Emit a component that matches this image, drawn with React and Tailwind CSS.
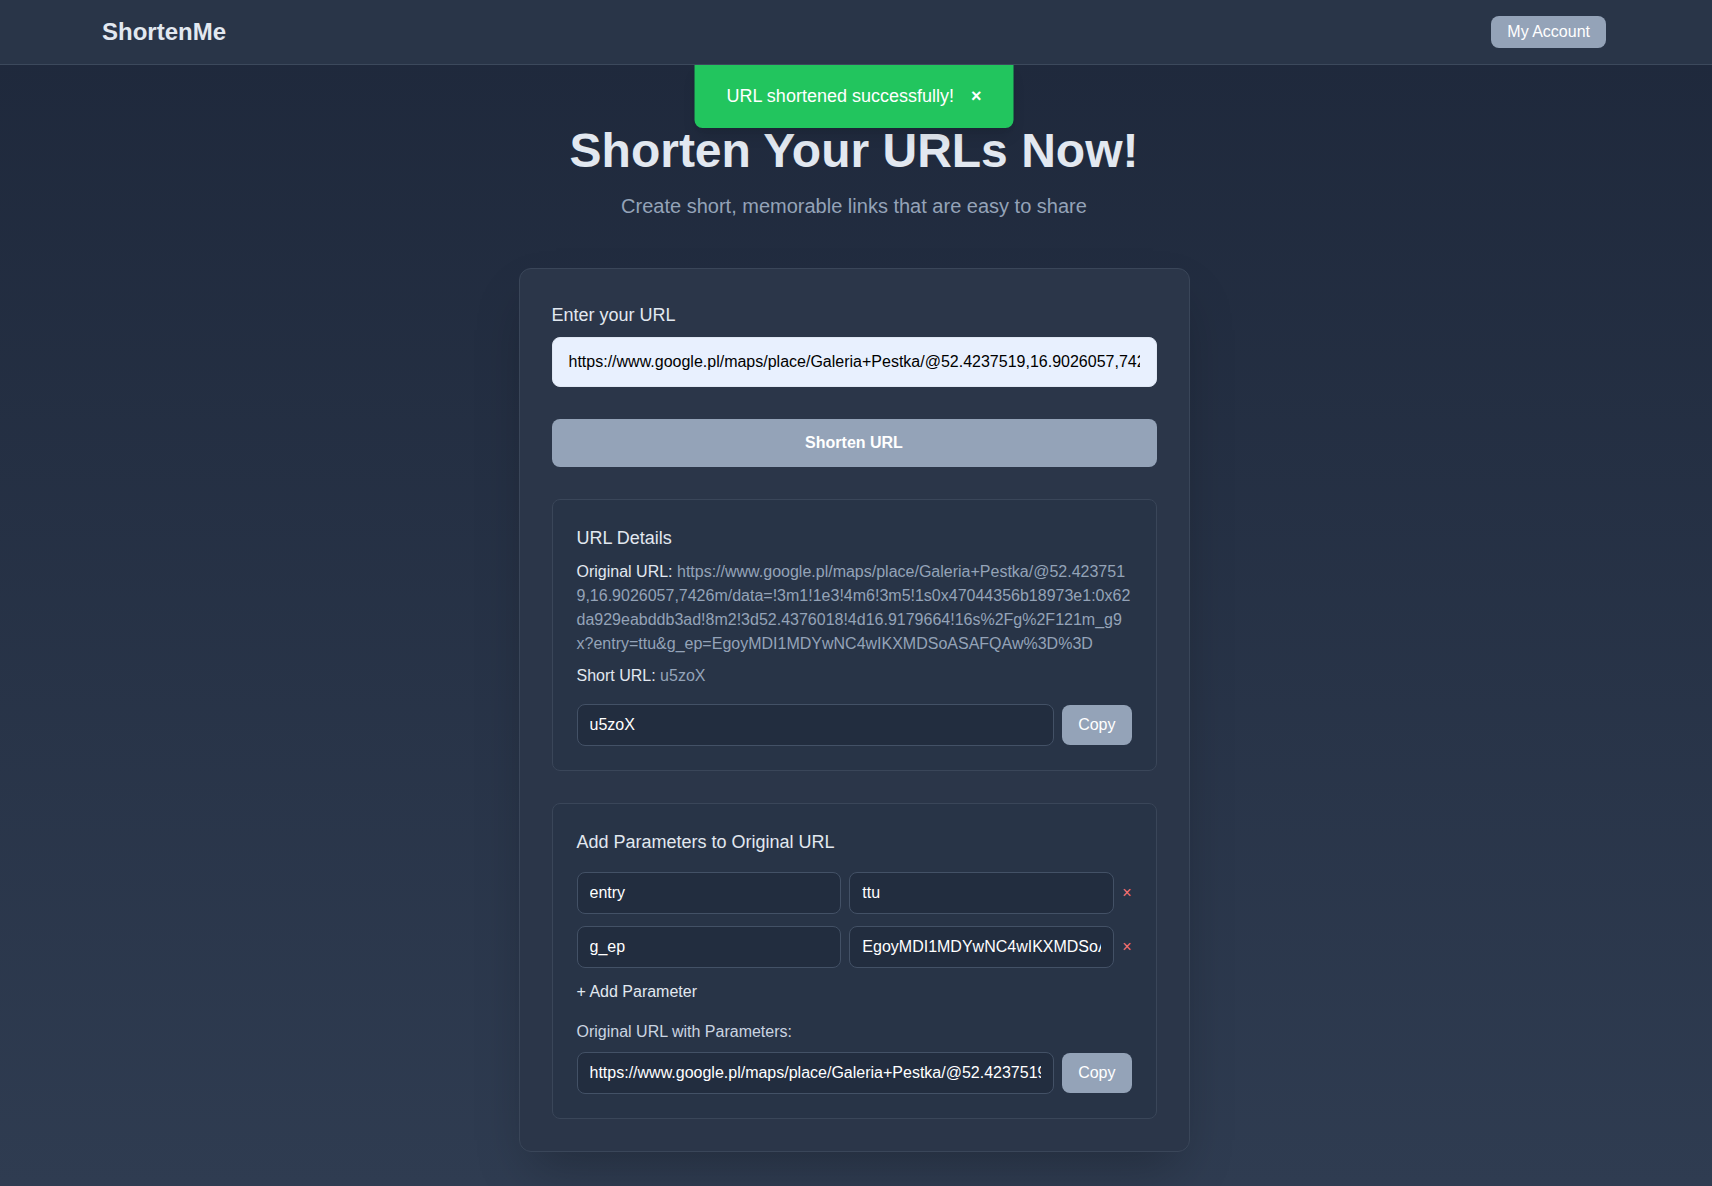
import React from "react";

const ORIGINAL =
  "https://www.google.pl/maps/place/Galeria+Pestka/@52.4237519,16.9026057,7426m/data=!3m1!1e3!4m6!3m5!1s0x47044356b18973e1:0x62da929eabddb3ad!8m2!3d52.4376018!4d16.9179664!16s%2Fg%2F121m_g9x?entry=ttu&g_ep=EgoyMDI1MDYwNC4wIKXMDSoASAFQAw%3D%3D";

function DarkInput({ value, className = "" }) {
  return (
    <input
      readOnly
      value={value}
      className={
        "min-w-0 rounded-lg border border-[#435166] bg-[#222d3f] px-3 py-2 text-base leading-6 text-white outline-none " +
        className
      }
    />
  );
}

function CopyBtn() {
  return (
    <button className="shrink-0 rounded-lg bg-[#94a3b8] px-4 py-2 text-base leading-6 text-white">
      Copy
    </button>
  );
}

export default function App() {
  const params = [
    ["entry", "ttu"],
    ["g_ep", "EgoyMDI1MDYwNC4wIKXMDSoASAFQAw%3D%3D"],
  ];
  return (
    <div className="relative min-h-screen bg-gradient-to-b from-[#1e283b] to-[#2f3c51] font-['Liberation_Sans',Arial,sans-serif]">
      <header className="relative z-20 border-b border-[#3c495c] bg-[#293548]">
        <div className="ml-[102px] mr-[106px] flex items-center justify-between py-4">
          <div className="text-2xl font-bold leading-8 text-[#e2e8f0]">ShortenMe</div>
          <button className="rounded-lg bg-[#94a3b8] px-4 py-1 text-base leading-6 text-white">
            My Account
          </button>
        </div>
      </header>

      <div className="relative pr-1">
        <div className="absolute left-[854px] top-[-1px] z-10 flex -translate-x-1/2 items-center rounded-b-lg bg-[#22c55e] px-8 py-[18px] shadow-lg">
          <span className="whitespace-nowrap text-lg leading-7 text-white">
            URL shortened successfully!
          </span>
          <button className="ml-[17px] text-lg font-bold leading-7 text-white">×</button>
        </div>

        <main className="pb-8 pt-[62px]">
          <h1 className="text-center text-5xl font-bold leading-[48px] text-[#e2e8f0]">
            Shorten Your URLs Now!
          </h1>
          <p className="mb-12 mt-[17px] text-center text-xl leading-7 text-[#94a3b8]">
            Create short, memorable links that are easy to share
          </p>

          <div className="mx-auto w-[671px] rounded-xl border border-[#3a4659] bg-[#2b3649] p-8 shadow-2xl">
            <label className="mb-2 block text-lg leading-7 text-[#e2e8f0]">Enter your URL</label>
            <input
              readOnly
              value={ORIGINAL}
              className="block w-full rounded-lg border border-[#dfe7f3] bg-[#e8f0fe] px-4 py-3 text-base leading-6 text-black outline-none"
            />
            <button className="mt-8 block w-full rounded-lg bg-[#94a3b8] py-3 text-base font-bold leading-6 text-white">
              Shorten URL
            </button>

            <div className="mt-8 rounded-lg border border-[#3a4659] bg-[#283447] p-6">
              <h2 className="mb-2 text-lg leading-7 text-[#e2e8f0]">URL Details</h2>
              <p className="break-all text-base leading-6 text-[#94a3b8]">
                <span className="text-[#e2e8f0]">Original URL: </span>
                {ORIGINAL}
              </p>
              <p className="mt-2 text-base leading-6 text-[#94a3b8]">
                <span className="text-[#e2e8f0]">Short URL: </span>u5zoX
              </p>
              <div className="mt-4 flex items-center gap-2">
                <DarkInput value="u5zoX" className="flex-1" />
                <CopyBtn />
              </div>
            </div>

            <div className="mt-8 rounded-lg border border-[#3a4659] bg-[#283447] p-6">
              <h2 className="mb-4 text-lg leading-7 text-[#e2e8f0]">Add Parameters to Original URL</h2>
              <div className="flex flex-col gap-3">
                {params.map(([k, v]) => (
                  <div key={k} className="flex items-center gap-2">
                    <DarkInput value={k} className="flex-1" />
                    <DarkInput value={v} className="flex-1" />
                    <button className="shrink-0 text-base leading-6 text-[#f87171]">×</button>
                  </div>
                ))}
              </div>
              <button className="mt-[12px] block text-base leading-6 text-[#e2e8f0]">+ Add Parameter</button>
              <p className="mt-4 text-base leading-6 text-[#cbd5e1]">Original URL with Parameters:</p>
              <div className="mt-2 flex items-center gap-2">
                <DarkInput value={ORIGINAL} className="flex-1" />
                <CopyBtn />
              </div>
            </div>
          </div>
        </main>
      </div>
    </div>
  );
}
